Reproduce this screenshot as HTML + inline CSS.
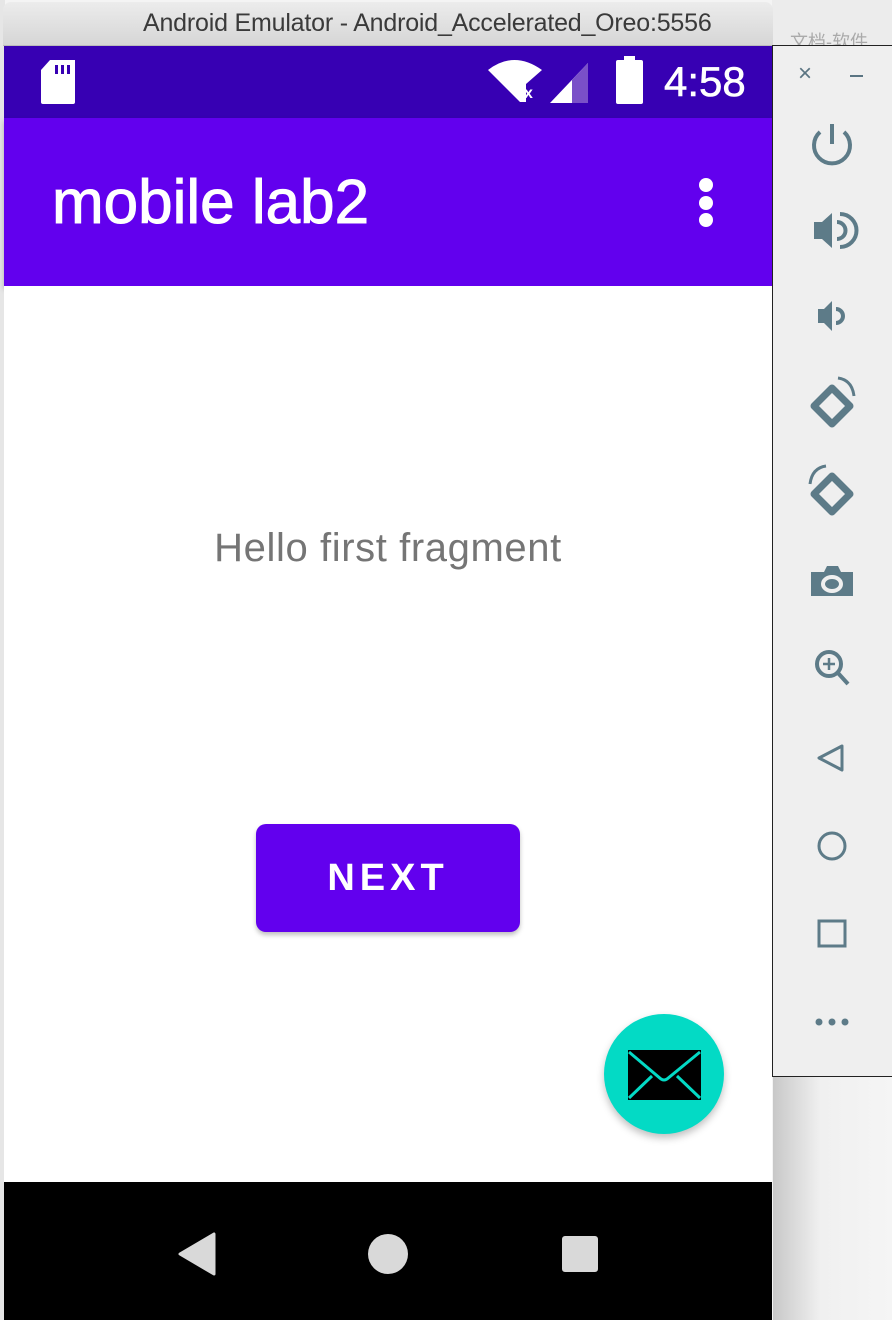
<!DOCTYPE html>
<html><head><meta charset="utf-8"><style>
html,body{margin:0;padding:0;}
body{width:892px;height:1320px;position:relative;overflow:hidden;background:#f4f4f4;font-family:"Liberation Sans","Noto Sans CJK SC",sans-serif;}
.abs{position:absolute;}
</style></head><body>
<div class="abs" style="left:772px;top:0;width:120px;height:45px;background:#ececec;"></div>
<div class="abs" style="left:790px;top:28px;font-size:18px;color:#aaa;">文档-软件</div>
<div class="abs" style="left:0;top:0;width:5px;height:1320px;background:#e6e6e6;"></div>
<div class="abs" style="left:3px;top:2px;width:770px;height:43px;background:linear-gradient(#ececec,#d6d6d6);border-radius:8px 8px 0 0;border-bottom:1px solid #bbb;"></div>
<div class="abs" style="left:143px;top:9px;font-size:25px;color:#3a3a3a;letter-spacing:-0.2px;">Android Emulator - Android_Accelerated_Oreo:5556</div>
<div class="abs" style="left:4px;top:46px;width:768px;height:72px;background:#3700b3;"></div>
<svg class="abs" style="left:38px;top:58px" width="40" height="48" viewBox="0 0 40 48"><path d="M12 2 H37 V44 Q37 46 35 46 H5 Q3 46 3 44 V12 Z" fill="#fff"/><rect x="17" y="7" width="3" height="9" fill="#3700b3"/><rect x="23" y="7" width="3" height="9" fill="#3700b3"/><rect x="29" y="7" width="3" height="9" fill="#3700b3"/></svg>
<svg class="abs" style="left:486px;top:58px" width="110" height="48" viewBox="0 0 110 48"><path d="M2 12 Q28 -8 56 12 L40 26 L40 44 L34 44 Z" fill="#fff"/><text x="38" y="40" font-size="16" font-weight="bold" fill="#fff" font-family="Liberation Sans">x</text><path d="M64 45 L102 5 V45 Z" fill="#fff"/><path d="M86 22 L102 5 V45 H86 Z" fill="#7a50c8"/></svg>
<div class="abs" style="left:616px;top:60px;width:27px;height:44px;background:#fff;border-radius:2px;"></div>
<div class="abs" style="left:624px;top:56px;width:11px;height:6px;background:#fff;"></div>
<div class="abs" style="left:664px;top:58px;font-size:42px;color:#fff;-webkit-text-stroke:0.6px #fff;">4:58</div>
<div class="abs" style="left:4px;top:118px;width:768px;height:168px;background:#6200ee;box-shadow:0 3px 5px rgba(0,0,0,0.25);"></div>
<div class="abs" style="left:52px;top:167px;font-size:62px;color:#fff;-webkit-text-stroke:1px #fff;">mobile lab2</div>
<div class="abs" style="left:699px;top:178px;width:14px;height:14px;border-radius:50%;background:#fff;"></div>
<div class="abs" style="left:699px;top:196px;width:14px;height:14px;border-radius:50%;background:#fff;"></div>
<div class="abs" style="left:699px;top:213px;width:14px;height:14px;border-radius:50%;background:#fff;"></div>
<div class="abs" style="left:4px;top:286px;width:768px;height:896px;background:#fff;"></div>
<div class="abs" style="left:4px;top:526px;width:768px;text-align:center;font-size:40px;letter-spacing:0.6px;color:#757575;">Hello first fragment</div>
<div class="abs" style="left:256px;top:824px;width:264px;height:108px;background:#6200ee;border-radius:10px;box-shadow:0 3px 5px rgba(0,0,0,0.25);color:#fff;font-size:38px;font-weight:bold;letter-spacing:5px;text-align:center;line-height:108px;">NEXT</div>
<div class="abs" style="left:604px;top:1014px;width:120px;height:120px;border-radius:50%;background:#03dac5;box-shadow:0 4px 8px rgba(0,0,0,0.25);"></div>
<svg class="abs" style="left:627px;top:1049px" width="75" height="52" viewBox="0 0 75 52"><rect x="1" y="1" width="73" height="50" fill="#000"/><path d="M2 3 L34 30 Q37 32 40 30 L73 3" stroke="#03dac5" stroke-width="3" fill="none"/><path d="M2 49 L25 27 M73 49 L50 27" stroke="#03dac5" stroke-width="3"/></svg>
<div class="abs" style="left:4px;top:1182px;width:768px;height:138px;background:#000;"></div>
<svg class="abs" style="left:178px;top:1232px" width="40" height="44"><path d="M36 2 V42 L2 22 Z" fill="#d9d9d9" stroke="#d9d9d9" stroke-width="3" stroke-linejoin="round"/></svg>
<div class="abs" style="left:368px;top:1234px;width:40px;height:40px;border-radius:50%;background:#d9d9d9;"></div>
<div class="abs" style="left:562px;top:1236px;width:36px;height:36px;border-radius:3px;background:#d9d9d9;"></div>
<div class="abs" style="left:772px;top:45px;width:120px;height:1030px;background:#efefef;border-left:1px solid #222;border-top:1px solid #222;border-bottom:1px solid #222;"></div>
<div class="abs" style="left:773px;top:1077px;width:119px;height:243px;background:linear-gradient(90deg,#c8c8c8,#f0f0f0 40%,#f5f5f5);"></div>
<div class="abs" style="left:798px;top:60px;font-size:24px;color:#5a7482;">×</div>
<div class="abs" style="left:850px;top:75px;width:13px;height:2px;background:#5a7482;"></div>
<svg class="abs" style="left:772px;top:100px" width="120" height="980" viewBox="0 0 120 980" fill="none" stroke="#5d7b88" stroke-width="4">
<path d="M60 24 V44"/><path d="M48 32 A18 18 0 1 0 72 32" />
<path d="M42 122 H50 L60 113 V148 L50 139 H42 Z" fill="#5d7b88" stroke="none"/><path d="M65 122 A8 8 0 0 1 65 139" /><path d="M68 114 A16 16 0 0 1 68 147"/>
<path d="M46 209 H52 L60 201 V231 L52 223 H46 Z" fill="#5d7b88" stroke="none"/><path d="M64 209 A7 7 0 0 1 64 223" />
<path d="M42 306 L60 288 L78 306 L60 324 Z" stroke-width="7" stroke-linejoin="round"/><path d="M66 278 Q80 280 82 296" stroke-width="3"/>
<path d="M42 394 L60 376 L78 394 L60 412 Z" stroke-width="7" stroke-linejoin="round"/><path d="M54 366 Q40 368 38 384" stroke-width="3"/>
<path d="M39 472 H52 L55 466 H66 L69 472 H81 V496 H39 Z" fill="#5d7b88" stroke="none"/><ellipse cx="60" cy="484" rx="9" ry="7" stroke="#efefef" stroke-width="4"/>
<circle cx="57" cy="564" r="12"/><path d="M66 573 L76 584"/><path d="M57 558 V570 M51 564 H63" stroke-width="2.5"/>
<path d="M70 646 L47 658 L70 670 Z" stroke-width="3" stroke-linejoin="round"/>
<circle cx="60" cy="746" r="13" stroke-width="3"/>
<rect x="47" y="821" width="26" height="25" stroke-width="3"/>
<circle cx="47" cy="922" r="3.5" fill="#5d7b88" stroke="none"/><circle cx="60" cy="922" r="3.5" fill="#5d7b88" stroke="none"/><circle cx="73" cy="922" r="3.5" fill="#5d7b88" stroke="none"/>
</svg>
</body></html>
